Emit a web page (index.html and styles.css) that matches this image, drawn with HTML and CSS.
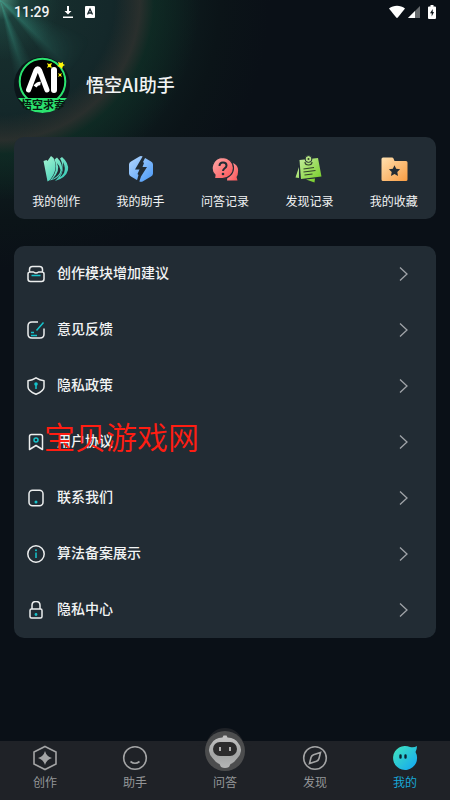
FILE: index.html
```html
<!DOCTYPE html>
<html lang="zh-CN">
<head>
<meta charset="utf-8">
<meta name="viewport" content="width=device-width, initial-scale=1">
<title>悟空AI助手</title>
<link rel="stylesheet" href="styles.css">
</head>
<body>
<div class="status">
  <span class="time">11:29</span>
  <svg width="12" height="14" viewBox="0 0 12 14"><path d="M5 1h2v5h2.500L6 9.500 2.500 6H5zM1 11.500h10V13H1z" fill="#fff"/></svg>
  <svg class="badge" width="10" height="12" viewBox="0 0 10 12"><rect width="10" height="12" rx="1" fill="#fff"/><path d="M2.500 8.500 5 3l2.500 5.500M3.500 7h3" fill="none" stroke="#17262b" stroke-width="1.300"/></svg>
  <span class="spacer"></span>
  <svg width="16" height="14" viewBox="0 0 16 14"><path d="M0 3.500C4.500-.2 11.500-.2 16 3.500L8.800 12.500q-.8.900-1.600 0z" fill="#fff"/></svg>
  <svg class="signal" width="12" height="12" viewBox="0 0 12 12"><path d="M12 0v12H0z" fill="#666a6d"/><path d="M7 5v7H0z" fill="#fff"/></svg>
  <svg width="8" height="14" viewBox="0 0 8 14"><path d="M2.500 0h3v1.500H7q1 0 1 1V13q0 1-1 1H1q-1 0-1-1V2.500q0-1 1-1h1.500z" fill="#fff"/><path d="M4.700 4 2 8.300h1.700V11.500L6 7H4.700z" fill="#10171d"/></svg>
</div>

<main>
  <header class="profile">
    <svg class="avatar" width="58" height="58" viewBox="0 0 58 58">
      <defs><clipPath id="disc"><path d="M2 41h53v1q-6 14-26.500 14T2 42z"/></clipPath></defs>
      <circle cx="28" cy="28" r="28" fill="#0b1519"/>
      <circle cx="28.500" cy="24.500" r="22.800" fill="#000" stroke="#2be36f" stroke-width="2"/>
      <path d="M14.500 33 22 13.500q1.800-3.500 3.600 0L33 33" fill="none" stroke="#fff" stroke-width="5" stroke-linecap="round" stroke-linejoin="round"/>
      <path d="M21 29.500q2.500-3.500 5.500-3" fill="none" stroke="#fff" stroke-width="3.500"/>
      <path d="M40 13v20" stroke="#fff" stroke-width="6" stroke-linecap="round"/>
      <path d="m33 6 2 1 3-1-1 2.500 1 2.500-3-1-2 1 1-2.500zM44 5l3 1 2-1v2l2 1-2 1-1 3-2-2-3-1 2-1zM44 16l2 1 2-1-1 2 1 2-2-1-2 1 1-2z" fill="#fff60a"/>
      <g clip-path="url(#disc)"><path d="M4 41h49l-4 4q-6 11-20.500 11T8 45z" fill="#2be36f"/>
      <text x="29" y="52" class="avatar-text" text-anchor="middle">悟空求索</text></g>
    </svg>
    <h1>悟空AI助手</h1>
  </header>

  <nav class="card shortcuts" aria-label="我的内容">
    <a href="#creations">
      <svg width="28" height="28" viewBox="0 0 28 28"><defs><linearGradient id="g1" gradientUnits="userSpaceOnUse" x1="2" y1="2" x2="24" y2="26"><stop offset="0" stop-color="#a4f3d0"/><stop offset="1" stop-color="#30c8b5"/></linearGradient></defs><path d="m1.500 6 3-1 1 1L9 1l2.500 2c4 8 2 15-3.500 22l-2.500 1.500z" fill="url(#g1)"/><path d="M12.500 4.500 15 2.500q6 6 5 13-2 8-12 10C14 19 15.500 12 12.500 4.500z" fill="url(#g1)"/><path d="m18 3.500 2-1.500q7 6 6 13-2 8-13 11Q25 15 18 3.500z" fill="url(#g1)"/><path d="M15 8q4 8-5 16.500 8-4 8.500-9.500-.5-4-3.500-7z" fill="#222c34"/><path d="M21 7q3 6 1 11-2 3-4 4 4-6 3-15z" fill="#222c34"/></svg>
      <span>我的创作</span></a>
    <a href="#assistants">
      <svg width="28" height="28" viewBox="0 0 28 28"><defs><linearGradient id="g2" x1="0" y1="0" x2="1" y2="1"><stop offset="0" stop-color="#b5d8ff"/><stop offset="1" stop-color="#4898f6"/></linearGradient></defs><path d="M14 1q1 0 2 .8l8 4.600q2 1 2 3v9q0 2-2 3l-8 4.800q-2 1-4 0l-8-4.800q-2-1-2-3v-9q0-2 2-3l8-4.600q1-.8 2-.8z" fill="url(#g2)"/><path d="M16.500 0 8 14.500h4.500L10.500 19l1 1-2 7 2.500.5 2-6L20 12h-4.500l1.500-4-1-1L19 1z" fill="#222c34"/></svg>
      <span>我的助手</span></a>
    <a href="#answers">
      <svg width="28" height="28" viewBox="0 0 28 28"><defs><linearGradient id="g3" x1="0" y1="0" x2="1" y2="1"><stop offset="0" stop-color="#ffabaa"/><stop offset="1" stop-color="#fb5054"/></linearGradient></defs><path d="M18 8c6-1 10 4 9 9q0 3-1.500 5l1 3.500H16z" fill="url(#g3)"/><path d="M11.500 2.500a11 10.500 0 1 1 0 21H3.500l.5-3.500C-2 14 2 3 11.500 2.500z" fill="url(#g3)" stroke="#222c34" stroke-width="1.200"/><path d="M8.500 11c0-5 7-4.500 7-.5 0 3-3.500 2.500-3.500 5.500" fill="none" stroke="#222c34" stroke-width="2"/><circle cx="12" cy="19" r="1.300" fill="#222c34"/></svg>
      <span>问答记录</span></a>
    <a href="#discoveries">
      <svg width="28" height="28" viewBox="0 0 28 28"><defs><linearGradient id="g4" x1="0" y1="0" x2="1" y2="1"><stop offset="0" stop-color="#c3ed9b"/><stop offset="1" stop-color="#78ce2a"/></linearGradient></defs><path d="m4 12-3.500 10.500L4 23zM11 24.500l8.500 3 .5-4z" fill="url(#g4)"/><path d="M4.500 5 23 3l3.500 18.500L6 24z" fill="url(#g4)"/><path d="m8.500 14 10.500-1.500M8.500 17l12-1.500M9.500 20l8-1" stroke="#314129" stroke-width="1.200"/><path d="M10 7q0 3 3.500 3T17 7" fill="none" stroke="#314129" stroke-width="1.200"/><circle cx="13.500" cy="4" r="3.400" fill="#b3e283" stroke="#222c34"/><circle cx="13.500" cy="4" r="1" fill="#314129"/></svg>
      <span>发现记录</span></a>
    <a href="#favorites">
      <svg width="28" height="28" viewBox="0 0 28 28"><defs><linearGradient id="g5" x1="0" y1="0" x2="1" y2="1"><stop offset="0" stop-color="#ffe0af"/><stop offset="1" stop-color="#f99d43"/></linearGradient></defs><path d="M3 2.500h9q1 0 1.500 1l1 2.500H26q1.500 0 1.500 1.500v17q0 1.500-1.500 1.500H3q-1.500 0-1.500-1.500V4Q1.500 2.500 3 2.500z" fill="url(#g5)"/><path d="m14.500 10.300 1.700 3.500 3.900.5-2.800 2.700.7 3.900-3.500-1.900-3.500 1.900.7-3.900-2.800-2.700 3.900-.5z" fill="#222c34"/></svg>
      <span>我的收藏</span></a>
  </nav>

  <ul class="card menu">
    <li><a href="#suggest"><svg class="ico" viewBox="0 0 18 18"><path d="M2.500 7V4.500q0-3 3-3h7q3 0 3 3V7M1 9q0-2 2-2h3.500q2.500 2 5 0H15q2 0 2 2v5q0 2.500-2.500 2.500h-11Q1 16.500 1 14z"/><path class="accent" d="M4.500 10.500h9"/></svg><span>创作模块增加建议</span><svg class="arrow" viewBox="0 0 10 16"><path d="m1 1.500 7 6.500-7 6.500"/></svg></a></li>
    <li><a href="#feedback"><svg class="ico" viewBox="0 0 18 18"><path d="M11 1H5Q1 1 1 5v8q0 4 4 4h8q4 0 4-4V7.500"/><path class="accent" d="m16.500 1.500-7 8M4 11.500h3M4 14.500h6"/></svg><span>意见反馈</span><svg class="arrow" viewBox="0 0 10 16"><path d="m1 1.500 7 6.500-7 6.500"/></svg></a></li>
    <li><a href="#privacy"><svg class="ico" viewBox="0 0 18 18"><path d="M9 .8q3.500 2.200 8 3V10q0 4-8 7.200Q1 14 1 10V3.800Q5.500 3 9 .8z"/><path class="accent" d="M9 7v5"/><circle class="dot" cx="9" cy="7" r="1.800"/></svg><span>隐私政策</span><svg class="arrow" viewBox="0 0 10 16"><path d="m1 1.500 7 6.500-7 6.500"/></svg></a></li>
    <li><a href="#terms"><svg class="ico" viewBox="0 0 18 18"><path d="M2.500 3.500q0-2 2-2h9q2 0 2 2v13L9 12.500l-6.500 4z"/><circle class="accent" cx="9" cy="7" r="2"/></svg><span>用户协议</span><svg class="arrow" viewBox="0 0 10 16"><path d="m1 1.500 7 6.500-7 6.500"/></svg></a><p class="watermark">宝贝游戏网</p></li>
    <li><a href="#contact"><svg class="ico" viewBox="0 0 18 18"><rect x="2" y="1.200" width="14" height="15.600" rx="3.500"/><circle class="dot" cx="9" cy="13" r="1.500"/></svg><span>联系我们</span><svg class="arrow" viewBox="0 0 10 16"><path d="m1 1.500 7 6.500-7 6.500"/></svg></a></li>
    <li><a href="#algorithm"><svg class="ico" viewBox="0 0 18 18"><circle cx="9" cy="9" r="8.200"/><path class="accent" d="M9 7.500V13"/><circle class="dot" cx="9" cy="5.300" r="1"/></svg><span>算法备案展示</span><svg class="arrow" viewBox="0 0 10 16"><path d="m1 1.500 7 6.500-7 6.500"/></svg></a></li>
    <li><a href="#center"><svg class="ico" viewBox="0 0 18 18"><rect x="3" y="8" width="12" height="9" rx="1.500"/><path d="M5 8V4.500q0-4 4-4t4 4V8"/><circle class="dot" cx="9" cy="13.500" r="1.400"/></svg><span>隐私中心</span><svg class="arrow" viewBox="0 0 10 16"><path d="m1 1.500 7 6.500-7 6.500"/></svg></a></li>
  </ul>
</main>

<nav class="tabs" aria-label="主导航">
  <a href="#create"><svg class="tab" viewBox="0 0 26 26"><path d="M13 1.500 24 7v12l-11 5.500L2 19V7z"/><path class="solid" d="M13 6q1.500 5.500 7 7-5.500 1.500-7 7-1.500-5.500-7-7 5.500-1.500 7-7z"/></svg><span>创作</span></a>
  <a href="#assistant"><svg class="tab" viewBox="0 0 26 26"><circle cx="13" cy="13" r="11.300"/><path d="M8.500 16.500q4.500 3.500 9 0"/></svg><span>助手</span></a>
  <a href="#ask" class="ask"><svg class="robot" viewBox="0 0 56 56"><defs><linearGradient id="g6" x1="0" y1="0" x2="0" y2="1"><stop offset="0" stop-color="#c4c4c4"/><stop offset=".6" stop-color="#a2a4a4"/><stop offset="1" stop-color="#b5b6b6"/></linearGradient></defs><path d="M0 19q7 0 10-5Q16 1 28 1t18 13q3 5 10 5v5H0z" fill="#1f2227"/><circle cx="28" cy="24" r="20" fill="#4c4d4e"/><path d="M26.500 8.500h3l1 2q8 .5 11 6 3 3 2.500 7.500-.5 4-3.500 7-3 4.500-7 6l-1.500 3q-4 2-8 0L22.500 37q-4-1.500-7-6-3-3-3.500-7-.5-4.500 2.500-7.500 3-5.500 11-6z" fill="url(#g6)"/><rect x="16" y="15" width="24" height="14" rx="7" fill="#2b2b2c"/><path d="M23 20v4M33 20v4" stroke="#b0b0b0" stroke-width="2"/></svg><span>问答</span></a>
  <a href="#discover"><svg class="tab" viewBox="0 0 26 26"><circle cx="13" cy="13" r="11.300"/><path d="m18.500 7.500-1.500 6q-.5 2-2.500 2.800L7.500 18.500 9 12.500q.5-2 2.500-2.800z"/></svg><span>发现</span></a>
  <a href="#me" class="active" aria-current="page"><svg class="tab" viewBox="0 0 26 26"><defs><linearGradient id="g7" x1="0" y1="0" x2="1" y2="1"><stop offset="0" stop-color="#42e6bb"/><stop offset="1" stop-color="#12a5f4"/></linearGradient></defs><path class="face" d="M18 2q4 1 7-1 0 3-1.500 6A12 12 0 1 1 18 2z"/><path class="eyes" d="M8.500 10.500v2M13.500 10.500v2"/></svg><span>我的</span></a>
</nav>
</body>
</html>
```
FILE: styles.css
```css
* { box-sizing: border-box; }

body {
  position: relative;
  margin: 0;
  min-height: 100vh;
  display: flex;
  flex-direction: column;
  color: #f2f4f5;
  font-family: "Noto Sans CJK SC", sans-serif;
  background:
    radial-gradient(circle at 0 0, rgba(120, 225, 195, .5), rgba(50, 130, 115, .2) 20px, transparent 60px),
    radial-gradient(circle at 0 0, transparent 115px, rgba(66, 60, 54, .5) 140px, rgba(14, 52, 38, .5) 154px, transparent 200px),
    radial-gradient(circle at 0 0, #18322f 0, #14282a 110px, #0e1d1f 165px, #0b1418 220px, #0a1017 270px);
  background-color: #0a1017;
}

/* light rays from the top-left corner */
body::before {
  content: "";
  position: absolute;
  top: 0;
  left: 0;
  z-index: -1;
  width: 130px;
  height: 130px;
  background: conic-gradient(from 90deg at 0 0, transparent 22deg, rgba(60, 165, 145, .55) 44deg, transparent 52deg, transparent 62deg, rgba(60, 165, 145, .55) 72deg, transparent 80deg);
  -webkit-mask-image: radial-gradient(circle at 0 0, #000, transparent 100px);
  mask-image: radial-gradient(circle at 0 0, #000, transparent 100px);
}

html { background: #0a1017; }
body { z-index: 0; }

a { color: inherit; text-decoration: none; }
svg { display: block; flex: none; }

.status {
  display: flex;
  align-items: center;
  height: 24px;
  padding: 0 14px;
}
.time { font: 500 14px Roboto, sans-serif; margin-right: 12px; }
.badge { margin-left: 11px; }
.spacer { flex: 1; }
.signal { margin: 0 8px 0 3px; }

main { flex: 1; padding: 33px 14px 0; }

.profile { display: flex; align-items: center; gap: 14px; height: 58px; }
.avatar-text { font-size: 11px; font-weight: 700; fill: #07190f; }
h1 { margin: 0; padding-bottom: 4px; font-size: 18px; font-weight: 500; line-height: 24px; }

.card { border-radius: 10px; background: #222c34; }

.shortcuts { display: flex; height: 82px; margin-top: 22px; padding-top: 18px; }
.shortcuts a {
  flex: 1;
  display: flex;
  flex-direction: column;
  align-items: center;
  gap: 9px;
  font-size: 12px;
  line-height: 18px;
}

.menu { list-style: none; margin: 27px 0 0; padding: 0; }
.menu li { position: relative; }
.menu a { display: flex; align-items: center; height: 56px; padding: 0 27px 0 13px; }
.menu span { flex: 1; padding-bottom: 4px; margin-left: 12px; font-size: 14px; font-weight: 500; line-height: 20px; }
.ico { width: 18px; height: 18px; fill: none; stroke: #eceeee; stroke-width: 1.5; stroke-linejoin: round; }
.accent { stroke: #16c4cc; }
.dot { fill: #16c4cc; stroke: none; }
.arrow { width: 10px; height: 16px; fill: none; stroke: #a0a4a8; stroke-width: 1.3; }

.watermark {
  position: absolute;
  top: 2px;
  left: 30px;
  margin: 0;
  color: #ff1d12;
  font-size: 31px;
  font-weight: 350;
  line-height: 40px;
  pointer-events: none;
}

.tabs { display: flex; height: 59px; background: #1f2227; color: #949698; }
.tabs a {
  flex: 1;
  display: flex;
  flex-direction: column;
  align-items: center;
  justify-content: flex-end;
  gap: 2px;
  padding-bottom: 9px;
  font-size: 12px;
  line-height: 18px;
}
.tab { width: 26px; height: 26px; fill: none; stroke: #a3a4a5; stroke-width: 1.6; }
.solid { fill: #a3a4a5; stroke: none; }
.robot { width: 56px; height: 56px; margin-bottom: -12px; }
.tabs .active { color: #17a9d8; }
.face { fill: url(#g7); stroke: none; }
.eyes { stroke: #0c2230; stroke-width: 2.4; stroke-linecap: round; }
```
